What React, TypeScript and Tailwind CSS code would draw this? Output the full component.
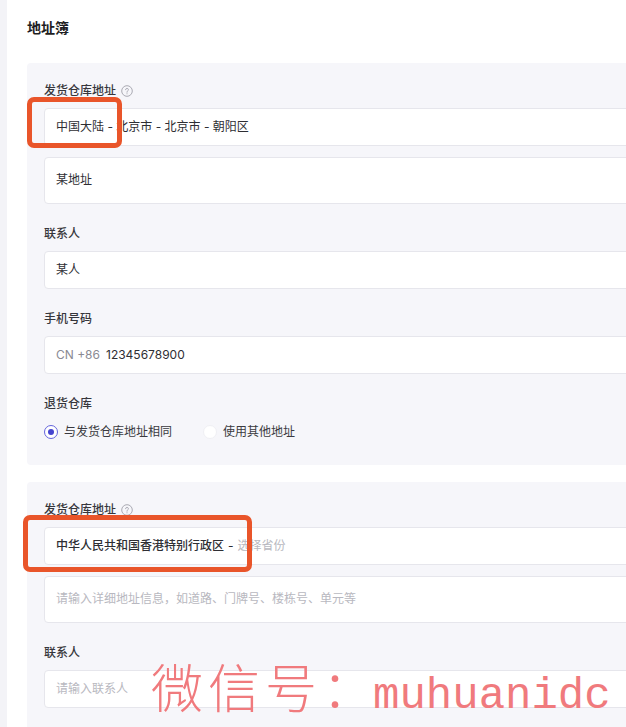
import React from 'react';

const font = { fontFamily: 'Inter, "Noto Sans CJK SC", sans-serif' };

function HelpIcon() {
  return (
    <svg className="ml-[5px] h-[12px] w-[12px]" viewBox="0 0 12 12" fill="none">
      <circle cx="6" cy="6" r="5.3" stroke="#a2a2ab" strokeWidth="0.9" />
      <path d="M4.6 4.7a1.4 1.4 0 1 1 2 1.3c-.4.2-.6.5-.6.9v.3" stroke="#a2a2ab" strokeWidth="0.9" strokeLinecap="round" />
      <circle cx="6" cy="8.7" r="0.55" fill="#a2a2ab" />
    </svg>
  );
}

function Label({ text, help = false }: { text: string; help?: boolean }) {
  return (
    <div className="flex h-[18px] items-center text-[12px] font-medium text-[#36363c]">
      {text}
      {help && <HelpIcon />}
    </div>
  );
}

function Field({ children, tall = false }: { children: React.ReactNode; tall?: boolean }) {
  return (
    <div
      className={`flex rounded-[4px] border border-[#e6e6ec] bg-white px-[11px] text-[12px] ${
        tall ? 'h-[47px] items-start pt-[13px]' : 'h-[38px] items-center'
      }`}
    >
      {children}
    </div>
  );
}

function Radio({ checked, label }: { checked: boolean; label: string }) {
  return (
    <div className="flex items-center">
      {checked ? (
        <span className="flex h-[14px] w-[14px] items-center justify-center rounded-full border-[1.5px] border-[#6464dc] bg-white">
          <span className="h-[6px] w-[6px] rounded-full bg-[#4545cf]" />
        </span>
      ) : (
        <span className="h-[14px] w-[14px] rounded-full border border-[#f0f0f4] bg-white" />
      )}
      <span className="ml-[6px] text-[12px] text-[#3a3a40]">{label}</span>
    </div>
  );
}

export default function App() {
  return (
    <div className="relative flex h-[727px] w-[626px] overflow-hidden bg-white" style={font}>
      {/* left page edge */}
      <div className="w-[7px] shrink-0 bg-[#f3f3f7]" />

      <div className="w-[680px] shrink-0 pl-[20px]">
        <h1 className="mt-[18px] h-[20px] text-[14px] font-bold leading-[20px] text-[#1d1d22]">地址簿</h1>

        {/* Sender warehouse */}
        <section className="mt-[25px] rounded-[4px] bg-[#f6f6fa] px-[17px] pb-[24px] pt-[19px]">
          <Label text="发货仓库地址" help />
          <div className="mt-[8px]">
            <Field>
              <span className="text-[#2e2e33]">中国大陆 - 北京市 - 北京市 - 朝阳区</span>
            </Field>
          </div>
          <div className="mt-[11px]">
            <Field tall>
              <span className="text-[#2e2e33]">某地址</span>
            </Field>
          </div>

          <div className="mt-[21px]">
            <Label text="联系人" />
          </div>
          <div className="mt-[8px]">
            <Field>
              <span className="text-[#2e2e33]">某人</span>
            </Field>
          </div>

          <div className="mt-[21px]">
            <Label text="手机号码" />
          </div>
          <div className="mt-[8px]">
            <Field>
              <span className="text-[#8a8a93]">CN +86</span>
              <span className="ml-[6px] text-[#2e2e33]">12345678900</span>
            </Field>
          </div>

          <div className="mt-[21px]">
            <Label text="退货仓库" />
          </div>
          <div className="mt-[10px] flex h-[18px] items-center gap-[31px]">
            <Radio checked label="与发货仓库地址相同" />
            <Radio checked={false} label="使用其他地址" />
          </div>
        </section>

        {/* Second address */}
        <section className="mt-[17px] rounded-[4px] bg-[#f6f6fa] px-[17px] pb-[24px] pt-[19px]">
          <Label text="发货仓库地址" help />
          <div className="mt-[8px]">
            <Field>
              <span className="font-medium text-[#2e2e33]">中华人民共和国香港特别行政区</span>
              <span className="ml-[4px] text-[#2e2e33]">-</span>
              <span className="ml-[4px] text-[#b8b8c0]">选择省份</span>
            </Field>
          </div>
          <div className="mt-[11px]">
            <Field tall>
              <span className="text-[#b8b8c0]">请输入详细地址信息，如道路、门牌号、楼栋号、单元等</span>
            </Field>
          </div>

          <div className="mt-[21px]">
            <Label text="联系人" />
          </div>
          <div className="mt-[8px]">
            <Field>
              <span className="text-[#b8b8c0]">请输入联系人</span>
            </Field>
          </div>
        </section>
      </div>

      {/* annotation boxes */}
      <div className="absolute left-[27px] top-[97px] h-[51px] w-[95px] rounded-[7px] border-[5px] border-[#e9552a]" />
      <div className="absolute left-[23px] top-[515px] h-[57px] w-[229px] rounded-[7px] border-[5px] border-[#e9552a]" />

      {/* watermark */}
      <div className="pointer-events-none absolute left-[151px] top-[660px] flex items-baseline whitespace-nowrap leading-none text-[#f07a7d]">
        <span className="text-[52px] font-light tracking-[5px]" style={{ fontFamily: '"Noto Sans CJK SC", serif' }}>
          微信号：
        </span>
        <span className="-ml-[6px] text-[44px]" style={{ fontFamily: '"Liberation Mono", monospace' }}>
          muhuanidc
        </span>
      </div>
    </div>
  );
}
